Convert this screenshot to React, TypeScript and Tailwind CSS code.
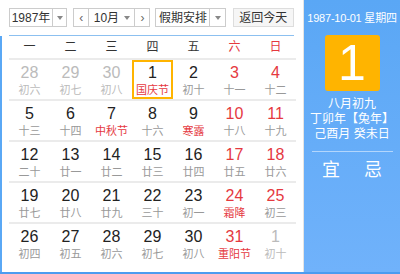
type Day = { n: number; l: string; other?: boolean; fest?: boolean; today?: boolean };

const rows: Day[][] = [
  [
    { n: 28, l: '初六', other: true },
    { n: 29, l: '初七', other: true },
    { n: 30, l: '初八', other: true },
    { n: 1, l: '国庆节', fest: true, today: true },
    { n: 2, l: '初十' },
    { n: 3, l: '十一' },
    { n: 4, l: '十二' },
  ],
  [
    { n: 5, l: '十三' },
    { n: 6, l: '十四' },
    { n: 7, l: '中秋节', fest: true },
    { n: 8, l: '十六' },
    { n: 9, l: '寒露', fest: true },
    { n: 10, l: '十八' },
    { n: 11, l: '十九' },
  ],
  [
    { n: 12, l: '二十' },
    { n: 13, l: '廿一' },
    { n: 14, l: '廿二' },
    { n: 15, l: '廿三' },
    { n: 16, l: '廿四' },
    { n: 17, l: '廿五' },
    { n: 18, l: '廿六' },
  ],
  [
    { n: 19, l: '廿七' },
    { n: 20, l: '廿八' },
    { n: 21, l: '廿九' },
    { n: 22, l: '三十' },
    { n: 23, l: '初一' },
    { n: 24, l: '霜降', fest: true },
    { n: 25, l: '初三' },
  ],
  [
    { n: 26, l: '初四' },
    { n: 27, l: '初五' },
    { n: 28, l: '初六' },
    { n: 29, l: '初七' },
    { n: 30, l: '初八' },
    { n: 31, l: '重阳节', fest: true },
    { n: 1, l: '初十', other: true },
  ],
];

const weekdays = ['一', '二', '三', '四', '五', '六', '日'];

function Arrow() {
  return <span className="block w-0 h-0 border-l-[3.5px] border-r-[3.5px] border-t-[4px] border-l-transparent border-r-transparent border-t-[#888]" />;
}

function Cell({ d, col }: { d: Day; col: number }) {
  const weekend = col >= 5;
  let numColor = 'text-[#222]';
  if (d.other) numColor = 'text-[#bbb]';
  else if (weekend) numColor = 'text-[#e5393f]';
  let lunarColor = 'text-[#999]';
  if (d.other) lunarColor = 'text-[#bbb]';
  if (d.fest) lunarColor = 'text-[#e5393f]';
  return (
    <div
      className={`flex flex-col items-center h-full ${
        d.today ? 'border-2 border-[#ffb400] pt-[1px]' : 'pt-[3px]'
      }`}
    >
      <span className={`text-[16px] leading-[20px] ${numColor}`}>{d.n}</span>
      <span className={`text-[11px] leading-[14px] ${lunarColor}`}>{d.l}</span>
    </div>
  );
}

export default function App() {
  return (
    <div
      className="w-[400px] h-[274px] flex bg-white border-b-2 border-[#4c9cf0] overflow-hidden"
      style={{ fontFamily: '"Liberation Sans", Arial, "Noto Sans CJK SC", sans-serif' }}
    >
      <div className="w-[303px] flex flex-col">
        <div className="h-[36px] mx-[9px] pt-[8px] flex items-start gap-[6px] border-b border-[#8cc0f0] text-[12px] text-[#333]">
          <div className="flex h-[19px] w-[59px] border border-[#ccc]">
            <span className="w-[42px] flex items-center justify-center">1987年</span>
            <span className="flex-1 flex items-center justify-center border-l border-[#ccc]">
              <Arrow />
            </span>
          </div>
          <div className="flex h-[19px] w-[78px] border border-[#ccc]">
            <span className="w-[15px] flex items-center justify-center border-r border-[#ccc] text-[#666]">‹</span>
            <span className="flex-1 flex items-center justify-center gap-[5px]">
              10月
              <Arrow />
            </span>
            <span className="w-[15px] flex items-center justify-center border-l border-[#ccc] text-[#666]">›</span>
          </div>
          <div className="flex h-[19px] w-[71px] border border-[#ccc] -ml-[1px]">
            <span className="w-[53px] flex items-center justify-center">假期安排</span>
            <span className="flex-1 flex items-center justify-center border-l border-[#ccc]">
              <Arrow />
            </span>
          </div>
          <div className="h-[19px] w-[62px] ml-[1px] flex items-center justify-center border border-[#ddd] bg-[#f6f6f6]">
            返回今天
          </div>
        </div>
        <div className="flex-1 border-l-2 border-[#5aa8f5]">
          <div className="mx-[7px]">
            <div className="grid grid-cols-7 h-[24px] items-center text-[12px] border-b-2 border-[#ebebeb]">
              {weekdays.map((w, i) => (
                <span key={w} className={`text-center ${i >= 5 ? 'text-[#e5393f]' : 'text-[#333]'}`}>
                  {w}
                </span>
              ))}
            </div>
            {rows.map((r, ri) => (
              <div
                key={ri}
                className={`grid grid-cols-7 h-[41px] ${ri < rows.length - 1 ? 'border-b-2 border-[#ebebeb]' : ''}`}
              >
                {r.map((d, ci) => (
                  <Cell key={ci} d={d} col={ci} />
                ))}
              </div>
            ))}
          </div>
        </div>
      </div>
      <div className="flex-1 flex flex-col items-center bg-gradient-to-b from-[#5aa7f5] to-[#70b2fb] text-white border-l border-[#e4e4e4]">
        <div className="mt-[11px] text-[11px] leading-[14px] whitespace-nowrap tracking-[-0.2px]">1987-10-01 星期四</div>
        <div className="mt-[10px] w-[55px] h-[56px] rounded-[3px] bg-[#ffb400] flex items-center justify-center text-[50px] leading-none">
          1
        </div>
        <div className="mt-[6px] text-[12px] flex flex-col items-center">
          <span className="leading-[15px]">八月初九</span>
          <span className="leading-[15px]">丁卯年【兔年】</span>
          <span className="leading-[15px]">己酉月 癸未日</span>
        </div>
        <div className="mt-[9px] w-[81px] h-[1px] bg-white/50" />
        <div className="mt-[6px] flex gap-[24px] text-[18px] leading-[24px]">
          <span>宜</span>
          <span>忌</span>
        </div>
      </div>
    </div>
  );
}
